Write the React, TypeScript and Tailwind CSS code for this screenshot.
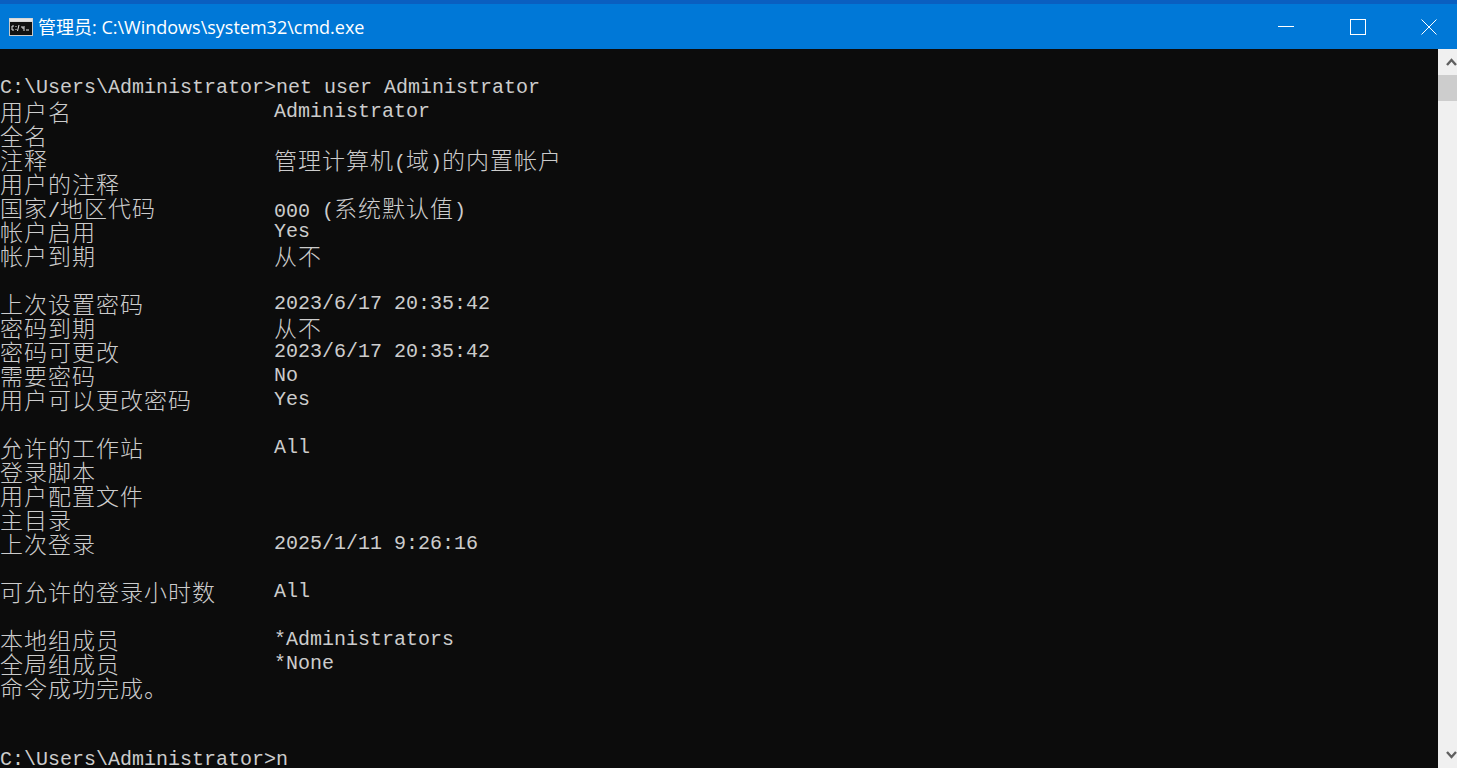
const cjk = '"Noto Sans CJK SC", "Liberation Mono", monospace';

// each row of the console: label column + value column
const rows: [string, string][] = [
  ['', ''],
  ['C:\\Users\\Administrator>net user Administrator', ''],
  ['用户名', 'Administrator'],
  ['全名', ''],
  ['注释', '管理计算机(域)的内置帐户'],
  ['用户的注释', ''],
  ['国家/地区代码', '000 (系统默认值)'],
  ['帐户启用', 'Yes'],
  ['帐户到期', '从不'],
  ['', ''],
  ['上次设置密码', '2023/6/17 20:35:42'],
  ['密码到期', '从不'],
  ['密码可更改', '2023/6/17 20:35:42'],
  ['需要密码', 'No'],
  ['用户可以更改密码', 'Yes'],
  ['', ''],
  ['允许的工作站', 'All'],
  ['登录脚本', ''],
  ['用户配置文件', ''],
  ['主目录', ''],
  ['上次登录', '2025/1/11 9:26:16'],
  ['', ''],
  ['可允许的登录小时数', 'All'],
  ['', ''],
  ['本地组成员', '*Administrators'],
  ['全局组成员', '*None'],
  ['命令成功完成。', ''],
  ['', ''],
  ['', ''],
  ['C:\\Users\\Administrator>n', ''],
];

function ConsoleText({ text }: { text: string }) {
  const parts = text.match(/[\u3000-\u9fff]+|[^\u3000-\u9fff]+/g) ?? [];
  return (
    <>
      {parts.map((p, i) =>
        /[\u3000-\u9fff]/.test(p) ? (
          <span key={i} className="text-[23px] tracking-[1px] font-extralight" style={{ fontFamily: cjk }}>
            {p}
          </span>
        ) : (
          <span key={i} className="text-[20px] font-['Liberation_Mono',monospace]">
            {p}
          </span>
        )
      )}
    </>
  );
}

function ConsoleRow({ label, value }: { label: string; value: string }) {
  return (
    <div className="flex h-[24px] leading-[24px] whitespace-pre">
      <div className={value ? 'w-[274px] shrink-0' : 'shrink-0'}>
        <ConsoleText text={label} />
      </div>
      <div>
        <ConsoleText text={value} />
      </div>
    </div>
  );
}

export default function App() {
  return (
    <div className="flex h-[768px] w-[1457px] flex-col overflow-hidden bg-[#0c0c0c]">
      <div className="h-[4px] shrink-0 bg-[#0a5fc0]" />
      <div className="flex h-[45px] shrink-0 items-center bg-[#0078d7] pl-[9px] text-white">
        <svg width="24" height="18" viewBox="0 0 24 18" className="shrink-0">
          <rect x="0" y="0" width="24" height="18" fill="#c8c8c8" />
          <rect x="0.5" y="0.5" width="23" height="3" fill="#e4e4e4" />
          <rect x="1" y="4" width="22" height="13" fill="#111111" />
          <path d="M5 8H3v4h2M7 8v1M7 11v1M10 7L8.5 13M13 8v2h2v-2M15 10v3M17 12h3" stroke="#e0e0e0" strokeWidth="1" fill="none" />
        </svg>
        <span className="ml-[5px] text-[18px] leading-[24px] whitespace-pre font-['Open_Sans','Noto_Sans_CJK_SC',sans-serif]">
          管理员: C:\Windows\system32\cmd.exe
        </span>
        <div className="flex-1" />
        <div className="mr-[20px] flex items-center">
          <div className="h-px w-[16px] bg-white" />
          <div className="ml-[56px] h-[16px] w-[16px] border border-white" />
          <svg width="16" height="16" viewBox="0 0 16 16" className="ml-[55px]">
            <path d="M0.5 0.5L15.5 15.5M15.5 0.5L0.5 15.5" stroke="#ffffff" strokeWidth="1" fill="none" />
          </svg>
        </div>
      </div>
      <div className="flex min-h-0 flex-1">
        <div className="min-w-0 flex-1 pt-[2px] text-[#cccccc]">
          {rows.map(([label, value], i) => (
            <ConsoleRow key={i} label={label} value={value} />
          ))}
        </div>
        <div className="flex w-[19px] shrink-0 flex-col bg-[#f0f0f0]">
          <div className="flex h-[26px] shrink-0 items-center pl-[8px]">
            <svg width="11" height="8" viewBox="0 0 11 8">
              <path d="M1 7L5.5 2L10 7" stroke="#606060" strokeWidth="2.4" fill="none" />
            </svg>
          </div>
          <div className="h-[26px] shrink-0 bg-[#cdcdcd]" />
          <div className="flex-1" />
          <div className="flex h-[26px] shrink-0 items-center pl-[8px]">
            <svg width="11" height="8" viewBox="0 0 11 8">
              <path d="M1 1L5.5 6L10 1" stroke="#606060" strokeWidth="2.4" fill="none" />
            </svg>
          </div>
        </div>
      </div>
    </div>
  );
}
